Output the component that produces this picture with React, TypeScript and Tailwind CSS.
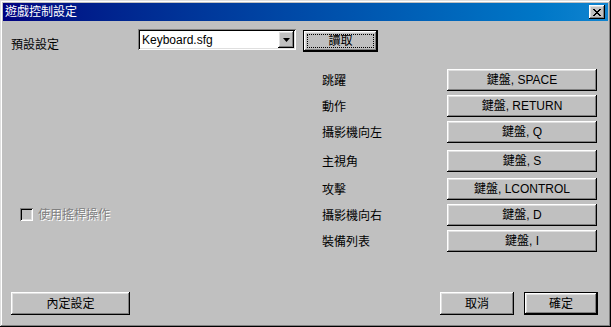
import React from "react";

const FONT = { fontFamily: '"Liberation Sans", "Noto Sans CJK TC", sans-serif' };

const raised =
  "bg-[#c0c0c0] shadow-[inset_-1px_-1px_#000,inset_1px_1px_#fff,inset_-2px_-2px_#808080,inset_2px_2px_#dfdfdf]";
const defaultBtn =
  "bg-[#c0c0c0] border border-black shadow-[inset_-1px_-1px_#000,inset_1px_1px_#fff,inset_-2px_-2px_#808080,inset_2px_2px_#dfdfdf]";

function Btn({ w, h, children, def, focus, className = "" }: { w: string; h: string; children: React.ReactNode; def?: boolean; focus?: boolean; className?: string }) {
  return (
    <div className={`${w} ${h} ${def ? defaultBtn : raised} flex items-center justify-center text-[12px] leading-none text-black relative ${className}`}>
      {focus && <div className="absolute inset-[3px] border border-dotted border-black" />}
      <span className="relative">{children}</span>
    </div>
  );
}

const rows: { label: string; key: string; mt: string }[] = [
  { label: "跳躍", key: "SPACE", mt: "mt-[16px]" },
  { label: "動作", key: "RETURN", mt: "mt-[4px]" },
  { label: "攝影機向左", key: "Q", mt: "mt-[4px]" },
  { label: "主視角", key: "S", mt: "mt-[7px]" },
  { label: "攻擊", key: "LCONTROL", mt: "mt-[6px]" },
  { label: "攝影機向右", key: "D", mt: "mt-[4px]" },
  { label: "裝備列表", key: "I", mt: "mt-[4px]" },
];

export default function App() {
  return (
    <div
      style={FONT}
      className="w-[611px] h-[327px] bg-[#c0c0c0] p-[3px] flex flex-col shadow-[inset_-1px_-1px_#000,inset_1px_1px_#dfdfdf,inset_-2px_-2px_#808080,inset_2px_2px_#fff] text-black"
    >
      {/* Title bar */}
      <div className="h-[18px] flex items-center bg-gradient-to-r from-[#000080] to-[#1084d0] pl-[2px] pr-[3px]">
        <span className="text-white text-[12px] leading-none flex-1">遊戲控制設定</span>
        <div className={`w-[16px] h-[14px] ${raised} flex items-center justify-center`}>
          <svg width="8" height="7" viewBox="0 0 8 7">
            <path d="M0 0h2v1h1v1h2V1h1V0h2v1H7v1H6v1H5v1h1v1h1v1h1v1H6V6H5V5H3v1H2v1H0V6h1V5h1V4h1V3H2V2H1V1H0z" fill="#000" />
          </svg>
        </div>
      </div>

      <div className="flex-1 flex flex-col">
        {/* Top row */}
        <div className="flex items-start mt-[8px]">
          <div className="w-[135px] pl-[8px] pt-[8px] text-[12px] leading-[16px]">預設設定</div>
          <div className="w-[158px] h-[21px] bg-white shadow-[inset_1px_1px_#808080,inset_-1px_-1px_#fff,inset_2px_2px_#000,inset_-2px_-2px_#dfdfdf] flex items-center p-[2px]">
            <span className="flex-1 pl-[2px] text-[12px] leading-none">Keyboard.sfg</span>
            <div className={`w-[16px] h-[17px] ${raised} flex items-center justify-center`}>
              <svg width="7" height="4" viewBox="0 0 7 4">
                <path d="M0 0h7L3.5 4z" fill="#000" />
              </svg>
            </div>
          </div>
          <Btn w="w-[75px]" h="h-[22px]" def focus className="ml-[7px] mt-[1px]">
            讀取
          </Btn>
        </div>

        {/* Main */}
        <div className="flex-1 flex">
          <div className="flex-1 pl-[17px] pt-[155px]">
            <div className="flex items-center">
              <div className="w-[13px] h-[13px] bg-[#c0c0c0] shadow-[inset_1px_1px_#808080,inset_-1px_-1px_#fff,inset_2px_2px_#000,inset_-2px_-2px_#dfdfdf]" />
              <span className="ml-[5px] text-[12px] leading-none text-[#808080] [text-shadow:1px_1px_0_#fff]">使用搖桿操作</span>
            </div>
          </div>
          <div className="flex flex-col mr-[11px]">
            {rows.map((r) => (
              <div key={r.label} className={`flex items-center ${r.mt}`}>
                <div className="w-[125px] text-[12px] leading-none pt-[2px]">{r.label}</div>
                <Btn w="w-[150px]" h="h-[22px]">
                  鍵盤, {r.key}
                </Btn>
              </div>
            ))}
          </div>
        </div>

        {/* Bottom row */}
        <div className="flex items-center h-[23px] mb-[9px]">
          <Btn w="w-[119px]" h="h-[23px]" className="ml-[8px]">
            內定設定
          </Btn>
          <div className="flex-1" />
          <Btn w="w-[74px]" h="h-[23px]">
            取消
          </Btn>
          <Btn w="w-[74px]" h="h-[23px]" def className="ml-[10px] mr-[10px]">
            確定
          </Btn>
        </div>
      </div>
    </div>
  );
}
